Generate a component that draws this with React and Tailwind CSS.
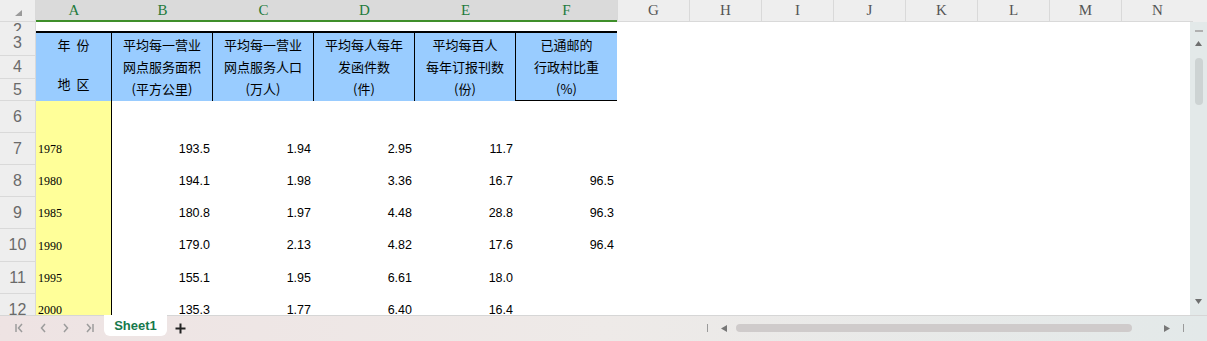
import { Fragment } from "react";

const cjk = { fontFamily: '"Noto Sans CJK SC", "Noto Sans", sans-serif' };
const arial = { fontFamily: '"Liberation Sans", Arial, sans-serif' };
const times = { fontFamily: '"Liberation Serif", "Times New Roman", serif' };
const letters = { fontFamily: '"Liberation Serif", "Times New Roman", serif' };

const mainCols = [
  { key: "A", w: "w-[76px]" },
  { key: "B", w: "w-[101px]" },
  { key: "C", w: "w-[101px]" },
  { key: "D", w: "w-[101px]" },
  { key: "E", w: "w-[101px]" },
  { key: "F", w: "w-[101px]" },
];
const restCols = ["G", "H", "I", "J", "K", "L", "M", "N"];

const heads = [
  ["平均每一营业", "网点服务面积", "(平方公里)"],
  ["平均每一营业", "网点服务人口", "(万人)"],
  ["平均每人每年", "发函件数", "(件)"],
  ["平均每百人", "每年订报刊数", "(份)"],
  ["已通邮的", "行政村比重", "(%)"],
];

const rows = [
  { n: 7, year: "1978", v: ["193.5", "1.94", "2.95", "11.7", ""] },
  { n: 8, year: "1980", v: ["194.1", "1.98", "3.36", "16.7", "96.5"] },
  { n: 9, year: "1985", v: ["180.8", "1.97", "4.48", "28.8", "96.3"] },
  { n: 10, year: "1990", v: ["179.0", "2.13", "4.82", "17.6", "96.4"], tall: true },
  { n: 11, year: "1995", v: ["155.1", "1.95", "6.61", "18.0", ""] },
  { n: 12, year: "2000", v: ["135.3", "1.77", "6.40", "16.4", ""] },
];

const RowNum = ({ n, h }) => (
  <div
    className={`${h} w-[36px] shrink-0 flex items-center justify-center bg-[#eeeeee] border-r border-b border-[#d9d9d9] text-[16px] text-[#6a6a6a]`}
    style={arial}
  >
    {n}
  </div>
);

const Chevron = ({ dir = "left", bar }) => (
  <svg width="12" height="12" viewBox="0 0 12 12" className="shrink-0">
    {dir === "left" ? (
      <>
        {bar && <line x1="2" y1="2" x2="2" y2="10" stroke="#9c9c9c" strokeWidth="1.5" />}
        <polyline points="8,2 4.5,6 8,10" fill="none" stroke="#9c9c9c" strokeWidth="1.5" />
      </>
    ) : (
      <>
        <polyline points="4,2 7.5,6 4,10" fill="none" stroke="#9c9c9c" strokeWidth="1.5" />
        {bar && <line x1="10" y1="2" x2="10" y2="10" stroke="#9c9c9c" strokeWidth="1.5" />}
      </>
    )}
  </svg>
);

const App = () => {
  return (
    <div className="w-[1207px] h-[341px] flex flex-col overflow-hidden bg-white">
      {/* column letters */}
      <div className="flex h-[22px] shrink-0 bg-[#eeeeee]">
        <div className="w-[36px] shrink-0 flex items-start justify-end pr-[13px] pt-[10px] border-r border-b border-[#d9d9d9]">
          <svg width="7" height="6" viewBox="0 0 7 6">
            <polygon points="7,0 7,6 0,6" fill="#9a9a9a" />
          </svg>
        </div>
        {mainCols.map((c) => (
          <div
            key={c.key}
            className={`${c.w} shrink-0 flex items-center justify-center bg-[#dadada] border-b-2 border-[#3f8f2a] text-[15px] text-[#1f7a3c]`}
            style={letters}
          >
            {c.key}
          </div>
        ))}
        {restCols.map((k) => (
          <div
            key={k}
            className="w-[72px] shrink-0 flex items-center justify-center border-l border-b border-[#d9d9d9] text-[15px] text-[#555]"
            style={letters}
          >
            {k}
          </div>
        ))}
      </div>

      <div className="flex flex-1 min-h-0">
        {/* sheet grid */}
        <div className="flex-1 flex flex-col overflow-hidden">
          {/* row 2 */}
          <div className="flex h-[9px] shrink-0">
            <div
              className="w-[36px] shrink-0 flex justify-center items-start overflow-hidden bg-[#eeeeee] border-r border-[#d9d9d9] text-[16px] leading-[16px] text-[#6a6a6a]"
              style={arial}
            >
              2
            </div>
          </div>

          {/* header block rows 3-5 */}
          <div className="flex h-[70px] shrink-0">
            <div className="flex flex-col w-[36px] shrink-0">
              <RowNum n={3} h="h-[25px]" />
              <RowNum n={4} h="h-[23px]" />
              <RowNum n={5} h="h-[22px]" />
            </div>
            <div
              className="w-[76px] shrink-0 flex flex-col items-center gap-[17px] pt-[1px] bg-[#99ccff] border-t-2 border-r border-black text-[13px] leading-[22px] text-black"
              style={cjk}
            >
              <span>年&nbsp;&nbsp;份</span>
              <span>地&nbsp;&nbsp;区</span>
            </div>
            {heads.map((lines, i) => (
              <div
                key={i}
                className={`w-[101px] shrink-0 flex flex-col items-center pt-[1px] bg-[#99ccff] border-t-2 border-black text-[13px] leading-[22px] text-black ${
                  i < 4 ? "border-r" : "border-b"
                }`}
                style={cjk}
              >
                {lines.map((l) => (
                  <span key={l}>{l}</span>
                ))}
              </div>
            ))}
          </div>

          {/* row 6 */}
          <div className="flex h-[32px] shrink-0">
            <RowNum n={6} h="h-[32px]" />
            <div className="w-[76px] shrink-0 bg-[#ffff99] border-r border-black" />
          </div>

          {rows.map((r) => {
            const h = r.tall ? "h-[33px]" : "h-[32px]";
            return (
              <div key={r.n} className={`flex ${h} shrink-0`}>
                <RowNum n={r.n} h={h} />
                <div
                  className="w-[76px] shrink-0 flex items-center pl-[2px] bg-[#ffff99] border-r border-black text-[12px] text-black"
                  style={times}
                >
                  {r.year}
                </div>
                {r.v.map((v, i) => (
                  <Fragment key={i}>
                    <div
                      className="w-[101px] shrink-0 flex items-center justify-end pr-[3px] text-[12.5px] text-black"
                      style={arial}
                    >
                      {v}
                    </div>
                  </Fragment>
                ))}
              </div>
            );
          })}
        </div>

        {/* vertical scrollbar */}
        <div className="w-[17px] shrink-0 flex flex-col items-center bg-[#e3e9e9]">
          <div className="mt-[8px] w-[8px] h-[2px] bg-[#b0b0b0]" />
          <svg width="7" height="5" viewBox="0 0 7 5" className="mt-[9px]">
            <polygon points="3.5,0 7,5 0,5" fill="#6f6f6f" />
          </svg>
          <div className="mt-[12px] w-[8px] h-[47px] rounded-full bg-[#cdd3d3]" />
          <div className="flex-1" />
          <svg width="7" height="5" viewBox="0 0 7 5" className="mb-[11px]">
            <polygon points="0,0 7,0 3.5,5" fill="#6f6f6f" />
          </svg>
        </div>
      </div>

      {/* sheet tabs + horizontal scrollbar */}
      <div className="h-[26px] shrink-0 flex items-start border-t border-[#d6d6d6] bg-linear-to-r from-[#eee3e3] via-[#eeeae8] to-[#e3e9e9]">
        <div className="flex items-center h-[24px] pl-[14px] gap-[11px]">
          <Chevron dir="left" bar />
          <Chevron dir="left" />
          <Chevron dir="right" />
          <Chevron dir="right" bar />
        </div>
        <div
          className="ml-[9px] w-[63px] h-[21px] -mt-px flex items-center justify-center bg-white rounded-b-[6px] text-[13px] font-bold text-[#16794c]"
          style={arial}
        >
          Sheet1
        </div>
        <div className="ml-[8px] h-[24px] flex items-center">
          <svg width="11" height="11" viewBox="0 0 11 11">
            <line x1="5.5" y1="0.5" x2="5.5" y2="10.5" stroke="#222" strokeWidth="2" />
            <line x1="0.5" y1="5.5" x2="10.5" y2="5.5" stroke="#222" strokeWidth="2" />
          </svg>
        </div>
        <div className="ml-auto mr-[23px] h-[24px] flex items-center">
          <div className="w-px h-[8px] bg-[#9a9a9a]" />
          <svg width="6" height="7" viewBox="0 0 6 7" className="ml-[13px]">
            <polygon points="0,3.5 6,0 6,7" fill="#777" />
          </svg>
          <div className="ml-[9px] w-[396px] h-[8px] rounded-full bg-[#cfcbcb]" />
          <svg width="6" height="7" viewBox="0 0 6 7" className="ml-[32px]">
            <polygon points="6,3.5 0,0 0,7" fill="#777" />
          </svg>
          <div className="ml-[13px] w-px h-[8px] bg-[#9a9a9a]" />
        </div>
      </div>
    </div>
  );
};

export default App;
